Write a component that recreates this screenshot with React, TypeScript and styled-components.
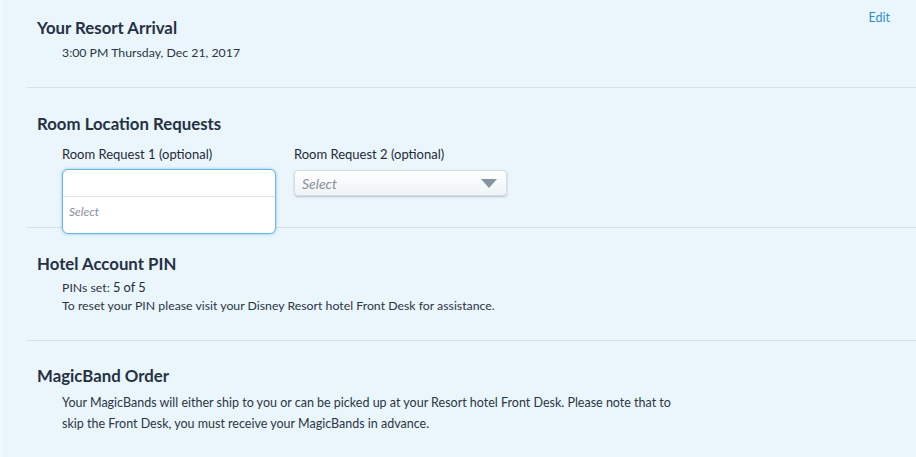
import React from 'react'
import styled, { createGlobalStyle } from 'styled-components'

const GlobalStyle = createGlobalStyle`
  html, body {
    margin: 0;
    padding: 0;
    background: #eaf5fc;
  }
  body {
    font-family: 'Lato', 'Noto Sans', sans-serif;
    color: #253142;
  }
`

const Page = styled.div`
  width: 916px;
  height: 457px;
  box-sizing: border-box;
  background: #eaf5fc;
  border-left: 2px solid #f3f9fd;
  padding-left: 25px;
  overflow: hidden;
`

const Section = styled.section<{ $top: number; $bottom: number; $divider?: boolean }>`
  position: relative;
  padding: ${(p) => p.$top}px 0 ${(p) => p.$bottom}px 10px;
  border-top: ${(p) => (p.$divider ? '1px solid #d9dfe3' : 'none')};
`

const Heading = styled.h2`
  margin: 0;
  font-size: 16.8px;
  line-height: 20px;
  font-weight: 700;
  color: #253142;
`

const Body = styled.div<{ $gap?: number }>`
  margin-top: ${(p) => p.$gap ?? 0}px;
  padding-left: 25px;
  font-size: 12.3px;
  line-height: 18px;
  color: #2b3644;
`

const Para = styled.p`
  margin: 0;
  max-width: 612px;
  font-size: 12.5px;
  line-height: 21px;
  color: #2b3644;
`

const Strong = styled.span`
  font-size: 12.8px;
  color: #1f2a38;
`

const EditLink = styled.a`
  position: absolute;
  top: 10px;
  right: 26px;
  font-size: 12.5px;
  color: #2d8fd5;
  text-decoration: none;
`

const Fields = styled.div`
  display: flex;
  gap: 19px;
  padding-left: 25px;
  margin-top: 12px;
`

const Field = styled.div`
  position: relative;
  width: 213px;
`

const Label = styled.div`
  font-size: 13px;
  line-height: 16px;
  font-weight: 400;
  color: #1f2a38;
  margin-bottom: 8px;
`

const ClosedSelect = styled.div`
  box-sizing: border-box;
  height: 26px;
  border: 1px solid #d6dde2;
  border-radius: 4px;
  background: linear-gradient(#ffffff, #eef3f7);
  box-shadow: 0 1px 2px rgba(0, 0, 0, 0.22);
  display: flex;
  align-items: center;
  justify-content: space-between;
  padding: 0 9px 0 7px;
`

const Placeholder = styled.span<{ $size: number }>`
  font-style: italic;
  font-size: ${(p) => p.$size}px;
  color: #8a8f98;
`

const Arrow = styled.span`
  width: 0;
  height: 0;
  border-left: 8px solid transparent;
  border-right: 8px solid transparent;
  border-top: 9px solid #8793a0;
`

const OpenSelect = styled.div`
  position: absolute;
  top: 23px;
  left: 0;
  width: 214px;
  box-sizing: border-box;
  border: 1px solid #6ab6e4;
  border-radius: 6px;
  background: #ffffff;
  box-shadow: 0 0 3px rgba(88, 170, 225, 0.7);
  z-index: 2;
`

const OpenInput = styled.div`
  height: 26px;
  border-bottom: 1px solid #dde2e6;
`

const Option = styled.div`
  height: 36px;
  box-sizing: border-box;
  padding: 5px 0 0 6px;
  line-height: 16px;
`

const Spacer = styled.div`
  height: 26px;
`

export default function App() {
  return (
    <>
      <GlobalStyle />
      <Page>
        <Section $top={18} $bottom={25}>
          <Heading>Your Resort Arrival</Heading>
          <Body $gap={6}>3:00 PM Thursday, Dec 21, 2017</Body>
          <EditLink href="#">Edit</EditLink>
        </Section>

        <Section $divider $top={26} $bottom={31}>
          <Heading>Room Location Requests</Heading>
          <Fields>
            <Field>
              <Label>Room Request 1 (optional)</Label>
              <Spacer />
              <OpenSelect>
                <OpenInput />
                <Option>
                  <Placeholder $size={12}>Select</Placeholder>
                </Option>
              </OpenSelect>
            </Field>
            <Field>
              <Label>Room Request 2 (optional)</Label>
              <ClosedSelect>
                <Placeholder $size={14}>Select</Placeholder>
                <Arrow />
              </ClosedSelect>
            </Field>
          </Fields>
        </Section>

        <Section $divider $top={26} $bottom={25}>
          <Heading>Hotel Account PIN</Heading>
          <Body $gap={4}>
            <div>
              PINs set: <Strong>5 of 5</Strong>
            </div>
            <div>To reset your PIN please visit your Disney Resort hotel Front Desk for assistance.</div>
          </Body>
        </Section>

        <Section $divider $top={25} $bottom={20}>
          <Heading>MagicBand Order</Heading>
          <Body $gap={6}>
            <Para>
              Your MagicBands will either ship to you or can be picked up at your Resort hotel Front Desk. Please note
              that to skip the Front Desk, you must receive your MagicBands in advance.
            </Para>
          </Body>
        </Section>
      </Page>
    </>
  )
}
